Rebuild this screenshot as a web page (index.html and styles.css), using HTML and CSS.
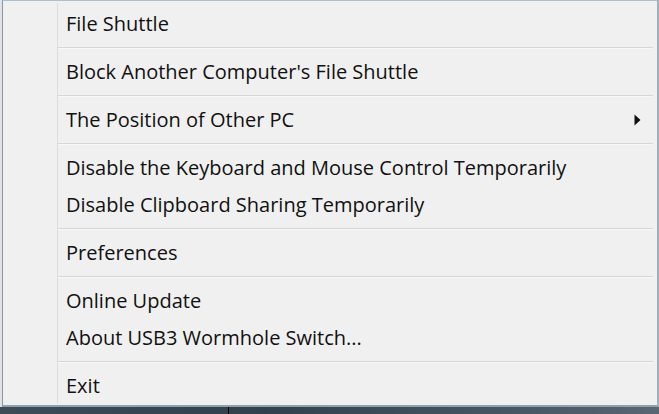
FILE: index.html
```html
<!DOCTYPE html>
<html>
<head>
<meta charset="utf-8">
<link rel="stylesheet" href="styles.css">
</head>
<body>
<div class="frame">
  <div class="menu">
    <div class="list">
      <div class="item">File Shuttle</div>
      <div class="sep"></div>
      <div class="item">Block Another Computer's File Shuttle</div>
      <div class="sep"></div>
      <div class="item has-sub"><span>The Position of Other PC</span>
        <svg class="arrow" width="7" height="12" viewBox="0 0 7 12"><path d="M0.5 0.5 L6.5 6 L0.5 11.5 Z" fill="#111"/></svg>
      </div>
      <div class="sep"></div>
      <div class="item">Disable the Keyboard and Mouse Control Temporarily</div>
      <div class="item">Disable Clipboard Sharing Temporarily</div>
      <div class="sep"></div>
      <div class="item">Preferences</div>
      <div class="sep"></div>
      <div class="item">Online Update</div>
      <div class="item">About USB3 Wormhole Switch...</div>
      <div class="sep"></div>
      <div class="item">Exit</div>
    </div>
  </div>
</div>
<div class="desk"><div class="cursor-line"></div></div>
</body>
</html>
```

FILE: styles.css
```css
html, body {
  margin: 0;
  padding: 0;
}
body {
  width: 659px;
  height: 414px;
  overflow: hidden;
  background: #3a4853;
  font-family: "Open Sans", "Noto Sans", sans-serif;
}
.frame {
  background: #dfe3e7;
  padding-left: 2px;
  padding-right: 0;
  height: 407px;
  box-sizing: border-box;
}
.menu {
  box-sizing: border-box;
  height: 407px;
  background: #f0f0f0;
  border-top: 1px solid #a9bfd6;
  border-left: 1px solid #8c98a3;
  border-right: 2px solid #a5aeb6;
  border-bottom: 2px solid #8fa0ae;
  padding: 2px 0 0 0;
}
.list {
  margin-left: 54px;
  margin-right: 4px;
  border-left: 1px solid #dcdcdc;
  padding-top: 2px;
  height: 400px;
  box-sizing: border-box;
}
.item {
  height: 37px;
  padding-left: 8px;
  padding-right: 12px;
  display: flex;
  align-items: center;
  justify-content: space-between;
  font-size: 20px;
  color: #111;
  white-space: nowrap;
}
.arrow {
  display: block;
}
.sep {
  height: 11px;
  box-sizing: border-box;
  padding-top: 5px;
}
.sep::before {
  content: "";
  display: block;
  height: 1px;
  background: #d6d6d6;
  border-bottom: 1px solid #f8f8f8;
}
.desk {
  height: 7px;
  background: linear-gradient(90deg, #3d4c57 0%, #33414b 40%, #4a5863 80%, #5a6670 100%);
}
.cursor-line {
  margin-left: 228px;
  width: 1px;
  height: 7px;
  background: #000;
}
```
